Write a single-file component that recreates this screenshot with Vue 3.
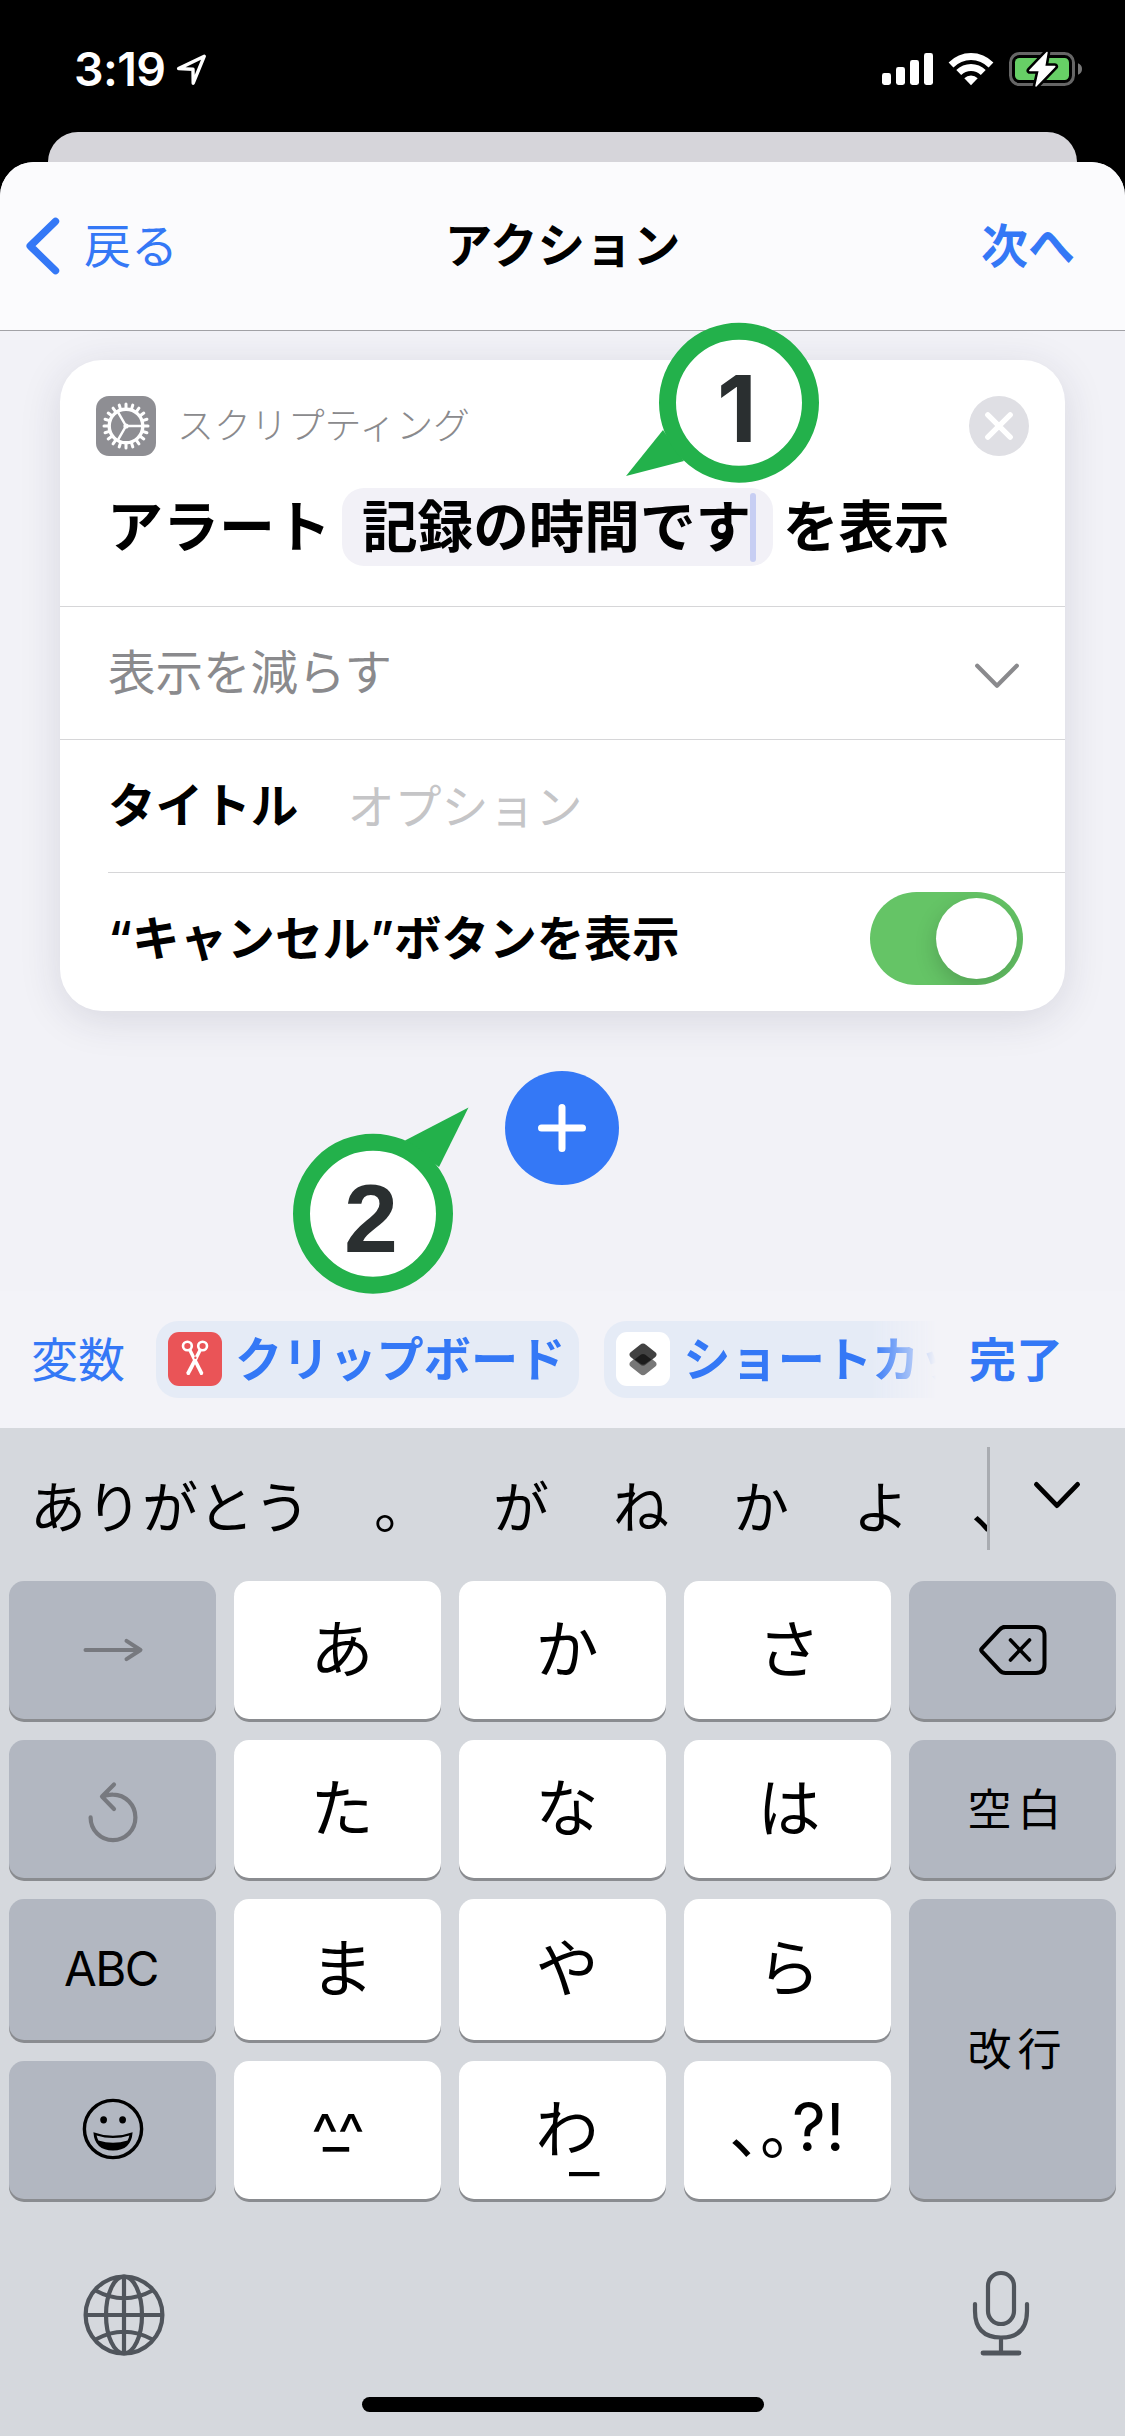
<script setup>
const teeth = Array.from({ length: 20 }, (_, i) => i * 18)
const signalBars = [
  { x: 0, h: 12 },
  { x: 14, h: 18 },
  { x: 28, h: 25 },
  { x: 42, h: 32 },
]
const candidates = [
  { text: 'ありがとう', w: 344 },
  { text: '。', w: 119 },
  { text: 'が', w: 120 },
  { text: 'ね', w: 120 },
  { text: 'か', w: 120 },
  { text: 'よ', w: 118 },
  { text: '、', w: 60 },
]
</script>

<template>
  <div class="screen" lang="ja">
    <header class="status">
      <div class="status-left">
        <span class="clock">3:19</span>
        <svg width="32" height="32" viewBox="0 0 32 32">
          <path d="M29.3 3.2 3.6 15.6 18 16.2 18.2 30.2Z" fill="none" stroke="#fff" stroke-width="3.4" stroke-linejoin="round" />
        </svg>
      </div>
      <div class="status-right">
        <svg width="51" height="36" viewBox="0 0 51 36">
          <rect v-for="b in signalBars" :key="b.x" :x="b.x" :y="34 - b.h" width="9" :height="b.h" rx="2.4" fill="#fff" />
        </svg>
        <svg width="46" height="36" viewBox="0 0 46 36">
          <path d="M0.6 11.4A31.5 31.5 0 0 1 45.4 11.4L40.6 16.4A24.6 24.6 0 0 0 5.4 16.4Z" fill="#fff" />
          <path d="M8.3 19A20.8 20.8 0 0 1 37.7 19L32.8 24A13.9 13.9 0 0 0 13.2 24Z" fill="#fff" />
          <path d="M16.3 27.2A9.6 9.6 0 0 1 29.7 27.2L23 34.2Z" fill="#fff" />
        </svg>
        <svg width="74" height="40" viewBox="0 0 74 40">
          <rect x="1.5" y="4.5" width="63" height="31" rx="9" fill="none" stroke="#666" stroke-width="3" />
          <path d="M69 14.2Q73 15.8 73 20T69 25.8Z" fill="#777" />
          <rect x="6" y="9" width="54" height="22" rx="4.5" fill="#67cf66" />
          <path d="M38 3.4 20.8 21.6H30.4L27 37 45.8 17.4H35.6Z" fill="#fff" stroke="#000" stroke-width="6.5" stroke-linejoin="round" />
          <path d="M38 3.4 20.8 21.6H30.4L27 37 45.8 17.4H35.6Z" fill="#fff" stroke="#fff" stroke-width="1.4" stroke-linejoin="round" />
        </svg>
      </div>
    </header>

    <div class="back-sheet"></div>

    <main class="sheet">
      <nav class="navbar">
        <div class="nav-side back">
          <svg width="36" height="60" viewBox="0 0 36 60">
            <path d="M30.5 5.3 5.2 30 30.5 54.7" fill="none" stroke="#3478f6" stroke-width="7.4" stroke-linecap="round" stroke-linejoin="round" />
          </svg>
          <span>戻る</span>
        </div>
        <div class="nav-title">アクション</div>
        <div class="nav-side next">次へ</div>
      </nav>

      <section class="content">
        <article class="card">
          <div class="card-head">
            <div class="card-category">
              <span class="gear">
                <svg width="60" height="60" viewBox="-30 -30 60 60">
                  <g stroke="#fff" fill="none">
                    <circle r="16.8" stroke-width="3.4" />
                    <line v-for="a in teeth" :key="a" x1="17.5" x2="22" y1="0" y2="0" stroke-width="3" stroke-linecap="round" :transform="`rotate(${a})`" />
                    <path d="M0 0H16M0 0-8 -13.9M0 0-8 13.9" stroke-width="2.5" />
                  </g>
                  <circle r="2.6" fill="#fff" />
                </svg>
              </span>
              <span class="category-name">スクリプティング</span>
              <span class="close">
                <svg width="60" height="60" viewBox="0 0 60 60">
                  <circle cx="30" cy="30" r="30" fill="#dfdfe4" />
                  <path d="M18.8 18.8 41.2 41.2M41.2 18.8 18.8 41.2" stroke="#fff" stroke-width="5.4" stroke-linecap="round" />
                </svg>
              </span>
            </div>
            <div class="sentence">
              <span>アラート</span>
              <span class="field">記録の時間です<i class="caret"></i></span>
              <span class="tail">を表示</span>
            </div>
          </div>
          <div class="row less">
            <span>表示を減らす</span>
            <svg width="46" height="28" viewBox="0 0 46 28">
              <path d="M3.2 3.8 23 23.8 42.8 3.8" fill="none" stroke="#8a8a8d" stroke-width="4.2" stroke-linecap="round" stroke-linejoin="round" />
            </svg>
          </div>
          <div class="row title-row">
            <span class="label">タイトル</span>
            <span class="placeholder">オプション</span>
          </div>
          <div class="row cancel-row">
            <span class="label">“キャンセル”ボタンを表示</span>
            <span class="toggle"><i class="knob"></i></span>
          </div>
        </article>

        <div class="add">
          <svg width="114" height="114" viewBox="0 0 114 114">
            <circle cx="57" cy="57" r="57" fill="#3478f6" />
            <path d="M57 36.5V77.5M36.5 57H77.5" stroke="#fff" stroke-width="7" stroke-linecap="round" />
          </svg>
        </div>
      </section>

      <section class="toolbar">
        <span class="vars">変数</span>
        <div class="chips">
          <div class="chip">
            <span class="chip-icon red">
              <svg width="54" height="54" viewBox="0 0 54 54">
                <g fill="none" stroke="#fff" stroke-width="2.6">
                  <ellipse cx="19.4" cy="14" rx="4.4" ry="4.2" />
                  <ellipse cx="34.6" cy="14" rx="4.4" ry="4.2" />
                </g>
                <path d="M20.2 18.4 23.2 17 35.2 40.5Q35.4 43.4 32.4 43L28.6 35.6Z" fill="#fff" />
                <path d="M33.8 18.4 30.8 17 18.4 40.5Q18.2 43.4 21.4 43L25.4 35.6Z" fill="#fff" />
                <circle cx="27.4" cy="25.8" r="1.2" fill="#ea5457" />
              </svg>
            </span>
            <span>クリップボード</span>
          </div>
          <div class="chip">
            <span class="chip-icon white">
              <svg width="54" height="54" viewBox="0 0 54 54">
                <rect x="-10.4" y="-10.4" width="20.8" height="20.8" rx="4" transform="translate(27 32.2) scale(1.04 .83) rotate(45)" fill="#777" />
                <rect x="-10.4" y="-10.4" width="20.8" height="20.8" rx="4" transform="translate(27 22.6) scale(1.04 .83) rotate(45)" fill="#424242" />
                <path d="M18.6 27.4 25 22.6Q27 21.4 29 22.6L35.4 27.4 29 32Q27 33 25 32Z" fill="#1c1c1c" />
              </svg>
            </span>
            <span>ショートカット</span>
          </div>
        </div>
        <span class="done">完了</span>
      </section>
    </main>

    <section class="keyboard">
      <div class="candidates">
        <div class="cand-list">
          <span v-for="c in candidates" :key="c.text" :style="{ width: c.w + 'px' }">{{ c.text }}</span>
        </div>
        <div class="cand-more">
          <svg width="50" height="32" viewBox="0 0 50 32">
            <path d="M4.4 4.4 25 25.6 45.6 4.4" fill="none" stroke="#000" stroke-width="4.8" stroke-linecap="round" stroke-linejoin="round" />
          </svg>
        </div>
      </div>

      <div class="keys">
        <div class="key fn">
          <svg width="62" height="26" viewBox="0 0 62 26">
            <path d="M3.5 13H58M44.5 3.8 58.5 13 44.5 22.2" fill="none" stroke="#77797f" stroke-width="4" stroke-linecap="round" stroke-linejoin="round" />
          </svg>
        </div>
        <div class="key">あ</div>
        <div class="key">か</div>
        <div class="key third">さ</div>
        <div class="key fn">
          <svg width="70" height="54" viewBox="0 0 70 54">
            <path d="M24.5 4H58Q66.5 4 66.5 12.5V41.5Q66.5 50 58 50H27.5Q24 50 21.6 47.4L3.8 28.4Q2.6 27 3.8 25.6L21.6 6.6Q24 4 27.5 4Z" fill="none" stroke="#000" stroke-width="4" />
            <path d="M32.5 17 51.5 37M51.5 17 32.5 37" stroke="#000" stroke-width="3.6" stroke-linecap="round" />
          </svg>
        </div>

        <div class="key fn">
          <svg class="undo" width="54" height="66" viewBox="0 0 54 66">
            <path d="M4.6 38.4A22.4 22.8 0 1 0 27 15.6Q21.5 15.4 16.4 17.4M28 5.6 16 17.6 28 30" fill="none" stroke="#77797f" stroke-width="4.2" stroke-linecap="round" stroke-linejoin="round" />
          </svg>
        </div>
        <div class="key">た</div>
        <div class="key">な</div>
        <div class="key third">は</div>
        <div class="key fn word">空白</div>

        <div class="key fn abc">ABC</div>
        <div class="key">ま</div>
        <div class="key">や</div>
        <div class="key third">ら</div>
        <div class="key fn word enter">改行</div>

        <div class="key fn">
          <svg class="smile" width="62" height="62" viewBox="0 0 62 62">
            <circle cx="31" cy="31" r="28.6" fill="none" stroke="#000" stroke-width="3.4" />
            <ellipse cx="21.6" cy="21.8" rx="3.4" ry="3.6" />
            <ellipse cx="40.6" cy="21.8" rx="3.4" ry="3.6" />
            <path d="M11.4 34.2Q31 41.4 50.6 34.2 49.4 52.4 31 52.4T11.4 34.2Z" />
            <path d="M14.6 37.6Q31 42.6 47.4 37.6 46.8 40.6 45.6 42.4 31 47 16.4 42.4 15.2 40.6 14.6 37.6Z" fill="#b2b7c1" />
          </svg>
        </div>
        <div class="key face">
          <span class="carets">^^</span>
          <span class="mouth">_</span>
        </div>
        <div class="key">わ<span class="low">_</span></div>
        <div class="key punct">
          <span class="kuten">、</span><span class="kuten">。</span><span class="marks">?!</span>
        </div>
      </div>

      <div class="dock">
        <svg class="globe" width="82" height="82" viewBox="0 0 82 82">
          <g fill="none" stroke="#50555c" stroke-width="4.2">
            <circle cx="41" cy="41" r="38.4" />
            <ellipse cx="41" cy="41" rx="18" ry="38.4" />
            <path d="M41 2.6V79.4M2.6 41H79.4M12.5 16.5Q41 32 69.5 16.5M12.5 65.5Q41 50 69.5 65.5" />
          </g>
        </svg>
        <svg width="58" height="86" viewBox="0 0 58 86">
          <g fill="none" stroke="#50555c" stroke-width="4.2" stroke-linecap="round">
            <rect x="16" y="3" width="26" height="51" rx="13" />
            <path d="M3 34V41Q3 67.5 29 67.5T55 41V34M29 68V82" />
            <path d="M11 83H47" stroke-width="4.8" />
          </g>
        </svg>
      </div>
      <div class="home-bar"></div>
    </section>

    <div class="badge one">
      <svg width="200" height="170" viewBox="0 0 200 170">
        <path d="M6 158 43 112 64 143Z" fill="#23b14b" />
        <circle cx="119" cy="84.7" r="71.5" fill="#fff" stroke="#23b14b" stroke-width="17" />
      </svg>
      <span>1</span>
    </div>
    <div class="badge two">
      <svg width="200" height="200" viewBox="0 0 200 200">
        <path d="M178.5 7.5 115 40.5 149 67Z" fill="#23b14b" />
        <circle cx="83" cy="113.7" r="71.5" fill="#fff" stroke="#23b14b" stroke-width="17" />
      </svg>
      <span>2</span>
    </div>
  </div>
</template>

<style>
body {
  margin: 0;
  background: #000;
}
</style>

<style scoped>
.screen {
  position: relative;
  width: 1125px;
  height: 2436px;
  overflow: hidden;
  background: #000;
  color: #000;
  font-family: Inter, "Noto Sans CJK JP", sans-serif;
  font-size: 47px;
  line-height: 60px;
  white-space: nowrap;
  display: flex;
  flex-direction: column;
}
svg {
  display: block;
  flex: none;
}
.status {
  height: 132px;
  display: flex;
  justify-content: space-between;
  box-sizing: border-box;
  padding: 51px 42px 0 74px;
}
.status-left,
.status-right {
  display: flex;
  height: 36px;
  align-items: center;
}
.status-left {
  gap: 10px;
}
.clock {
  color: #fff;
  font-weight: 600;
  font-size: 46.5px;
  letter-spacing: -0.6px;
}
.status-right {
  gap: 15px;
}
.back-sheet {
  height: 30px;
  margin: 0 48px;
  background: #d6d5da;
  border-radius: 30px 30px 0 0;
}
.sheet {
  height: 1266px;
  background: #f2f2f7;
  border-radius: 34px 34px 0 0;
  overflow: hidden;
  display: flex;
  flex-direction: column;
}
.navbar {
  height: 168px;
  border-bottom: 1px solid #a2a2a6;
  background: #fbfbfd;
  display: flex;
  align-items: center;
}
.nav-side {
  width: 300px;
  color: #3478f6;
  display: flex;
  align-items: center;
  box-sizing: border-box;
}
.back {
  padding-left: 25px;
  gap: 23px;
}
.next {
  justify-content: flex-end;
  padding-right: 50px;
  font-weight: 600;
}
.nav-title {
  flex: 1;
  text-align: center;
  font-weight: 600;
  font-size: 47.6px;
}
.content {
  height: 960px;
  display: flex;
  flex-direction: column;
  align-items: center;
  padding-top: 29px;
  box-sizing: border-box;
}
.card {
  width: 1005px;
  height: 651px;
  border-radius: 42px;
  background: #fff;
  box-shadow: 0 8px 42px rgba(40, 35, 70, 0.13);
}
.card-head {
  height: 247px;
  border-bottom: 1px solid #d6d6d8;
  padding: 36px 36px 0;
  box-sizing: border-box;
}
.card-category {
  display: flex;
  align-items: center;
  height: 60px;
}
.gear {
  border-radius: 13px;
  background: #8e8e93;
}
.category-name {
  flex: 1;
  padding-left: 21px;
  color: #8a8a8d;
  font-size: 36.9px;
  font-weight: 300;
}
.sentence {
  display: flex;
  align-items: center;
  height: 78px;
  margin-top: 32px;
  padding-left: 11px;
  font-size: 56px;
  font-weight: 600;
}
.field {
  display: flex;
  align-items: center;
  width: 431px;
  height: 78px;
  margin-left: 11px;
  padding-left: 20px;
  box-sizing: border-box;
  border-radius: 22px;
  background: #f2f1f7;
  font-size: 55.6px;
}
.caret {
  width: 6px;
  height: 69px;
  flex: none;
  margin-left: -1px;
  border-radius: 3px;
  background: #c7cef3;
}
.tail {
  padding-left: 10px;
  font-size: 55.5px;
}
.row {
  display: flex;
  align-items: center;
  box-sizing: border-box;
}
.less {
  height: 133px;
  justify-content: space-between;
  padding: 0 45px 0 48px;
  border-bottom: 1px solid #d6d6d8;
  color: #8a8a8d;
  font-size: 47.5px;
}
.less svg {
  margin-top: 6px;
}
.title-row {
  height: 133px;
  margin-left: 48px;
  border-bottom: 1px solid #d6d6d8;
}
.label {
  font-weight: 600;
  font-size: 47.6px;
}
.placeholder {
  color: #c5c5c7;
  padding-left: 49px;
}
.title-row .placeholder {
  padding-top: 2px;
}
.cancel-row {
  height: 138px;
  justify-content: space-between;
  padding: 0 42px 6px 48px;
}
.toggle {
  width: 153px;
  height: 93px;
  margin-bottom: 2px;
  border-radius: 47px;
  background: #65c466;
  display: flex;
  align-items: center;
  justify-content: flex-end;
  padding-right: 6px;
  box-sizing: border-box;
  overflow: hidden;
}
.knob {
  width: 81px;
  height: 81px;
  border-radius: 50%;
  background: #fff;
  box-shadow: 0 8px 22px rgba(0, 0, 0, 0.18);
}
.add {
  margin: 60px 1px 0 0;
}
.toolbar {
  height: 137px;
  display: flex;
  align-items: center;
  box-sizing: border-box;
  padding: 0 0 1px 31px;
  background: #f3f3f8;
  color: #3478f6;
}
.vars,
.done,
.chip > span:last-child {
  padding-top: 2px;
}
.chips {
  width: 782px;
  margin-left: 31px;
  display: flex;
  gap: 25px;
  overflow: hidden;
  mask-image: linear-gradient(to right, #000 716px, transparent 780px);
}
.chip {
  flex: none;
  height: 77px;
  display: flex;
  align-items: center;
  gap: 13px;
  padding: 0 14px 0 12px;
  border-radius: 22px;
  background: #e5ebf6;
  font-size: 47.2px;
  font-weight: 600;
}
.chip-icon {
  border-radius: 11px;
}
.red {
  background: #ea5457;
}
.white {
  background: #fff;
}
.done {
  font-weight: 600;
  margin-left: 31px;
}
.keyboard {
  height: 1008px;
  background: #d5d8dd;
  display: flex;
  flex-direction: column;
}
.candidates {
  height: 153px;
  display: flex;
}
.cand-list {
  width: 990px;
  height: 103px;
  margin-top: 19px;
  border-right: 3px solid #a9acb1;
  box-sizing: border-box;
  padding-left: 30px;
  display: flex;
  align-items: center;
  overflow: hidden;
  font-size: 56px;
}
.cand-list span {
  flex: none;
  padding-top: 18px;
}
.cand-more {
  padding: 52px 0 0 42px;
}
.keys {
  display: grid;
  grid-template-columns: repeat(5, 207px);
  grid-template-rows: 138px 138px 141px 138px;
  gap: 21px 18px;
  padding: 0 9px;
}
.key {
  display: flex;
  align-items: center;
  justify-content: center;
  position: relative;
  box-sizing: border-box;
  padding: 0 0 3px 9px;
  border-radius: 15px;
  background: #fff;
  box-shadow: 0 3px 0 #8a8c90;
  font-size: 63px;
}
.third {
  padding-left: 3px;
}
.fn {
  background: #b2b7c1;
  padding: 0;
}
.undo {
  margin-top: 5px;
}
.smile {
  margin-bottom: 3px;
}
.word {
  font-size: 44px;
  letter-spacing: 6px;
  padding: 2px 0 0 10px;
}
.abc {
  font-size: 47.5px;
  letter-spacing: -1.5px;
  padding: 0 3px 1px 0;
}
.enter {
  grid-row: 3 / span 2;
  grid-column: 5;
}
.face {
  padding: 0;
  flex-direction: column;
  font-size: 58px;
}
.carets {
  height: 44px;
  line-height: 68px;
  letter-spacing: -1px;
}
.mouth {
  height: 24px;
  line-height: 0;
  margin: -18px 3px 10px 0;
}
.low {
  position: absolute;
  left: 110px;
  top: 56px;
  font-size: 68px;
  font-weight: 300;
}
.punct {
  justify-content: flex-start;
  padding: 0 0 0 45px;
}
.kuten {
  width: 31px;
}
.marks {
  margin: -6px 0 0 1px;
  font-size: 66px;
}
.dock {
  display: flex;
  justify-content: space-between;
  padding: 71px 95px 0 83px;
}
.globe {
  margin-top: 4px;
}
.home-bar {
  width: 402px;
  height: 15px;
  margin: 41px auto 0;
  border-radius: 8px;
  background: #000;
}
.badge {
  position: absolute;
  color: #2a2f30;
  font-weight: 700;
  line-height: 100px;
}
.badge span {
  position: absolute;
}
.one {
  left: 620px;
  top: 318px;
}
.one span {
  left: 97px;
  top: 41px;
  font-family: Inter, sans-serif;
  font-size: 92px;
}
.two {
  left: 290px;
  top: 1100px;
}
.two span {
  left: 54px;
  top: 69px;
  font-family: "Liberation Sans", sans-serif;
  font-size: 97px;
}
</style>
